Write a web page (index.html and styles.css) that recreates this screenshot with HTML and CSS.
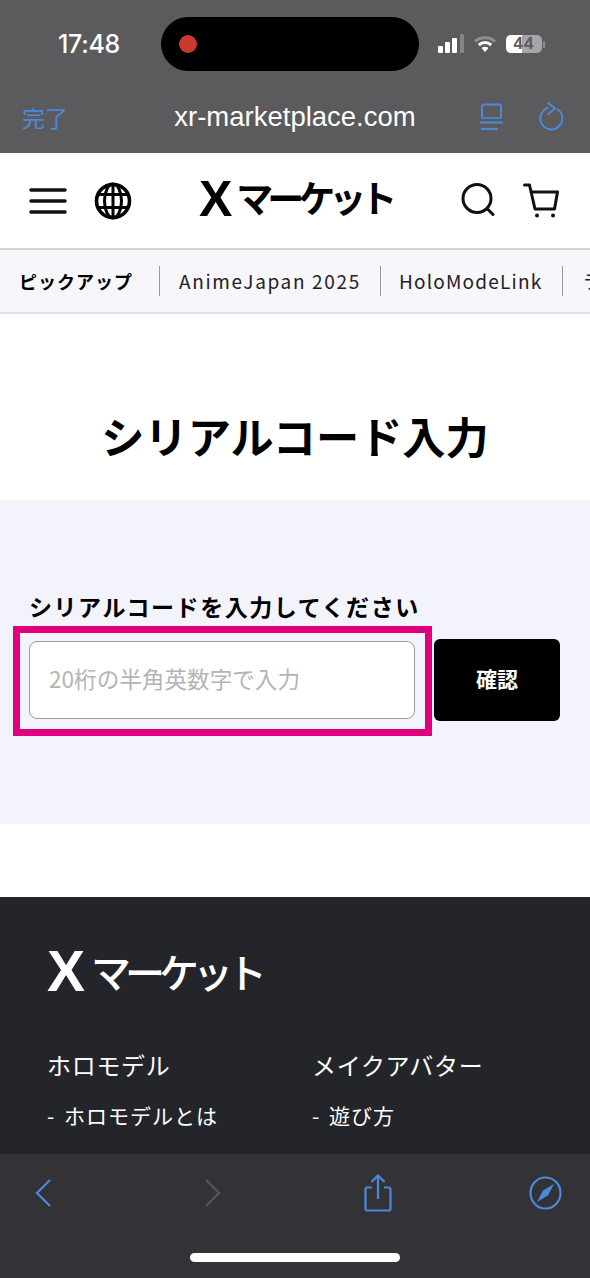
FILE: index.html
```html
<!DOCTYPE html>
<html lang="ja">
<head>
<meta charset="utf-8">
<title>シリアルコード入力</title>
<link rel="stylesheet" href="styles.css">
</head>
<body>
<div class="screen">
  <div class="chrome-top">
    <div class="status">
      <span class="time">17:48</span>
      <div class="island"><span class="rec"></span></div>
      <div class="status-icons">
        <svg class="sig" width="26" height="20" viewBox="0 0 26 20"><rect x="0" y="12" width="5" height="7" rx="1" fill="#fff"/><rect x="7" y="8" width="5" height="11" rx="1" fill="#fff"/><rect x="14" y="4" width="5" height="15" rx="1" fill="#fff"/><rect x="22" y="0" width="4" height="19" rx="1" fill="#858487"/></svg>
        <svg class="wifi" width="22" height="18" viewBox="0 0 22 18"><path d="M1 6.500C6.500 1.500 15.500 1.500 21 6.500" fill="none" stroke="#8f8e91" stroke-width="3"/><path d="M4.800 10C8.500 6.800 13.500 6.800 17.200 10" fill="none" stroke="#fff" stroke-width="3"/><path d="M7.500 13L11 17L14.500 13C12.500 11.300 9.500 11.300 7.500 13Z" fill="#fff"/></svg>
        <div class="battery"><span class="batt-fill"></span><span class="batt-text">44</span></div>
        <span class="batt-tip"></span>
      </div>
    </div>
    <div class="urlbar">
      <span class="done">完了</span>
      <span class="url">xr-marketplace.com</span>
      <div class="url-icons">
        <svg width="25" height="28" viewBox="0 0 25 28" fill="none" stroke="#4a8ad8" stroke-width="2"><path d="M3 15V3.500A2 2 0 0 1 5 1.500H20A2 2 0 0 1 22 3.500V15"/><path d="M3 15H22" stroke-width="1.500"/><path d="M1 19.500H24"/><path d="M2 26H19" stroke-width="2.200"/></svg>
        <svg width="25" height="32" viewBox="0 0 25 32" fill="none" stroke="#4a8ad8" stroke-width="2"><path d="M10.500 6.800A11 11 0 1 0 19 8"/><path d="M9.500 1.500L17 7.500L9.500 13.500"/></svg>
      </div>
    </div>
  </div>

  <header class="site-header">
    <div class="head-left">
      <svg width="38" height="28" viewBox="0 0 38 28" fill="none" stroke="#111" stroke-width="3.500" stroke-linecap="round"><path d="M2 3H36M2 14H36M2 25H36"/></svg>
      <svg width="38" height="38" viewBox="0 0 38 38" fill="none" stroke="#000" stroke-width="3"><circle cx="19" cy="19" r="16.500" stroke-width="3.600"/><ellipse cx="19" cy="19" rx="8.500" ry="17"/><path d="M19 2V36M3.500 12.500H34.500M3.500 25.500H34.500"/></svg>
    </div>
    <div class="logo logo-dark"><span class="logo-x">X</span><span class="logo-kana">マーケット</span></div>
    <div class="head-right">
      <svg width="36" height="36" viewBox="0 0 36 36" fill="none" stroke="#111" stroke-width="3"><circle cx="16" cy="15.500" r="14"/><path d="M26 25.500L32 31.500" stroke-linecap="round"/></svg>
      <svg width="36" height="36" viewBox="0 0 36 36" fill="none" stroke="#111" stroke-width="3" stroke-linecap="round" stroke-linejoin="round"><path d="M1.500 2H6.500L12 26H31.500L34.500 9H8"/><circle cx="14" cy="32.500" r="2" fill="#111" stroke="none"/><circle cx="30" cy="32.500" r="2" fill="#111" stroke="none"/></svg>
    </div>
  </header>

  <nav class="tabs">
    <span class="tab tab-strong">ピックアップ</span>
    <span class="tab tab-wide">AnimeJapan 2025</span>
    <span class="tab tab-mid">HoloModeLink</span>
    <span class="tab">ライブ</span>
  </nav>

  <main>
    <h1 class="title">シリアルコード入力</h1>
    <section class="panel">
      <label class="field-label" for="code">シリアルコードを入力してください</label>
      <div class="form-row">
        <input id="code" class="code-input" type="text" placeholder="20桁の半角英数字で入力">
        <button class="confirm" type="button">確認</button>
        <div class="highlight"></div>
      </div>
    </section>
  </main>

  <footer class="site-footer">
    <div class="logo logo-light"><span class="logo-x">X</span><span class="logo-kana">マーケット</span></div>
    <div class="foot-cols">
      <div class="foot-col">
        <div class="foot-head">ホロモデル</div>
        <div class="foot-link">- ホロモデルとは</div>
      </div>
      <div class="foot-col">
        <div class="foot-head">メイクアバター</div>
        <div class="foot-link">- 遊び方</div>
      </div>
    </div>
  </footer>

  <div class="chrome-bottom">
    <div class="toolbar">
      <svg class="tb-back" width="18" height="30" viewBox="0 0 18 30" fill="none" stroke="#4a8ad8" stroke-width="2.200"><path d="M16 2L3 15L16 28"/></svg>
      <svg class="tb-fwd" width="18" height="30" viewBox="0 0 18 30" fill="none" stroke="#57575b" stroke-width="2.200"><path d="M2 2L15 15L2 28"/></svg>
      <svg class="tb-share" width="28" height="38" viewBox="0 0 28 38" fill="none" stroke="#4a8ad8" stroke-width="2.200" stroke-linejoin="round"><path d="M8 13.500H3.500A2 2 0 0 0 1.500 15.500V34.500A2 2 0 0 0 3.500 36.500H24.500A2 2 0 0 0 26.500 34.500V15.500A2 2 0 0 0 24.500 13.500H20"/><path d="M14 25V2M7.500 8L14 1.500L20.500 8"/></svg>
      <svg class="tb-compass" width="33" height="34" viewBox="0 0 33 34" fill="none"><ellipse cx="16.500" cy="17" rx="15" ry="15.500" stroke="#4a8ad8" stroke-width="2.200"/><path d="M25 8L14 14.500L8 26L19 19.500Z" fill="#4a8ad8"/></svg>
    </div>
    <div class="home-bar"></div>
  </div>
</div>
</body>
</html>
```
FILE: styles.css
```css
* { box-sizing: border-box; }
html, body { margin: 0; padding: 0; }
body { background: #fff; font-family: "Noto Sans CJK JP", "Noto Sans", sans-serif; }
.screen { width: 590px; height: 1278px; overflow: hidden; display: flex; flex-direction: column; position: relative; }

.chrome-top { height: 153px; background: #5b5a5d; color: #fff; flex: none; padding-top: 17px; }
.status { height: 54px; display: flex; align-items: center; }
.time { width: 161px; padding-left: 58px; font: 500 25px Inter, "Liberation Sans", sans-serif; letter-spacing: -.3px; }
.island { width: 258px; height: 54px; border-radius: 27px; background: #000; display: flex; align-items: center; padding-left: 18px; flex: none; }
.rec { width: 18px; height: 18px; border-radius: 50%; background: #c93a2e; }
.status-icons { display: flex; align-items: center; margin-left: 19px; }
.sig { margin-right: 10px; }
.wifi { margin-right: 10px; }
.battery { width: 36px; height: 18px; border-radius: 5px; background: #a5a4a6; position: relative; overflow: hidden; display: flex; align-items: center; justify-content: center; flex: none; }
.batt-fill { position: absolute; left: 0; top: 0; bottom: 0; width: 16px; background: #fff; }
.batt-text { position: relative; font: 700 17px/18px "Liberation Sans", sans-serif; color: #5b5a5d; letter-spacing: 1px; }
.batt-tip { width: 2px; height: 7px; background: #8a898c; margin-left: 1px; }
.urlbar { height: 62px; margin-top: 15px; display: flex; align-items: center; padding: 0 27px 0 22px; }
.done { font-size: 23px; color: #4a8ad8; line-height: 1; width: 152px; flex: none; }
.url { font: 500 27.500px "Liberation Sans", Inter, sans-serif; width: 242px; text-align: center; white-space: nowrap; flex: none; }
.url-icons { display: flex; gap: 34px; margin-left: 63px; align-items: center; flex: none; }

.site-header { height: 97px; flex: none; background: #fff; display: flex; align-items: center; padding: 0 29px; border-bottom: 2px solid #d5d5d7; }
.head-left { display: flex; align-items: center; gap: 27px; width: 170px; flex: none; }
.logo { display: flex; align-items: center; line-height: 1; color: #000; }
.logo-dark { margin-bottom: 4px; }
.logo-x { font: 700 50px/1 "Liberation Sans", sans-serif; }
.logo-kana { font: 700 37px/1 "Noto Sans CJK JP", sans-serif; letter-spacing: -6px; margin-left: 4px; padding-bottom: 2px; }
.head-right { display: flex; gap: 26px; margin-left: auto; align-items: center; margin-right: 2px; }

.tabs { height: 64px; flex: none; background: #f7f6fa; display: flex; align-items: center; padding-left: 19px; white-space: nowrap; overflow: hidden; border-bottom: 2px solid #e0dfe3; color: #222; }
.tab { font-size: 19px; letter-spacing: 1.200px; line-height: 30px; padding-right: 19px; margin-right: 19px; border-right: 1px solid #9a9a9e; }
.tab-strong { font-size: 18px; font-weight: 700; color: #000; letter-spacing: 1px; padding-right: 26px; }
.tab-wide { letter-spacing: 1.650px; margin-right: 18px; }
.tab-mid { padding-right: 20px; }

main { flex: none; }
.title { margin: 0; height: 186px; display: flex; align-items: center; justify-content: center; font-size: 43.200px; font-weight: 700; color: #000; padding-top: 58px; line-height: 1; }
.panel { height: 324px; background: #f3f4fb; padding: 90px 30px 0 29px; margin-bottom: 73px; }
.field-label { display: block; font-size: 23px; font-weight: 700; letter-spacing: 1.550px; line-height: 32px; color: #000; }
.form-row { display: flex; align-items: center; margin-top: 17px; position: relative; height: 82px; }
.code-input { width: 386px; height: 78px; border: 1.500px solid #9c9ca0; border-radius: 8px; background: #fff; padding: 0 19px 4px; font: 400 22.600px "Noto Sans CJK JP", sans-serif; outline: none; flex: none; }
.code-input::placeholder { color: #b4b4b6; }
.confirm { width: 126px; height: 82px; margin-left: 19px; border: 0; border-radius: 6px; background: #000; color: #fff; font: 700 21px "Noto Sans CJK JP", sans-serif; padding: 0 0 4px; flex: none; }
.highlight { position: absolute; left: -16px; top: -13px; width: 419px; height: 110px; border: 7px solid #e0007f; }

.site-footer { height: 257px; flex: none; background: #24252b; color: #fff; padding: 46px 47px 0; overflow: hidden; }
.logo-light { color: #fff; }
.logo-light .logo-x { font-size: 57px; }
.logo-light .logo-kana { font-size: 40px; font-weight: 500; letter-spacing: -6px; margin-left: 6px; }
.foot-cols { display: flex; margin-top: 47px; }
.foot-col { width: 265px; flex: none; }
.foot-head { font-size: 24px; letter-spacing: .7px; line-height: 36px; }
.foot-link { font-size: 21px; letter-spacing: 1px; word-spacing: 3px; line-height: 30px; margin-top: 17px; }

.chrome-bottom { height: 124px; flex: none; background: #333337; position: relative; }
.toolbar { display: flex; align-items: center; height: 78px; padding-left: 34px; }
.tb-fwd { margin-left: 152px; }
.tb-share { margin-left: 142px; }
.tb-compass { margin-left: 137px; }
.home-bar { width: 210px; height: 9px; border-radius: 5px; background: #fff; margin: 21px auto 0; }
```
